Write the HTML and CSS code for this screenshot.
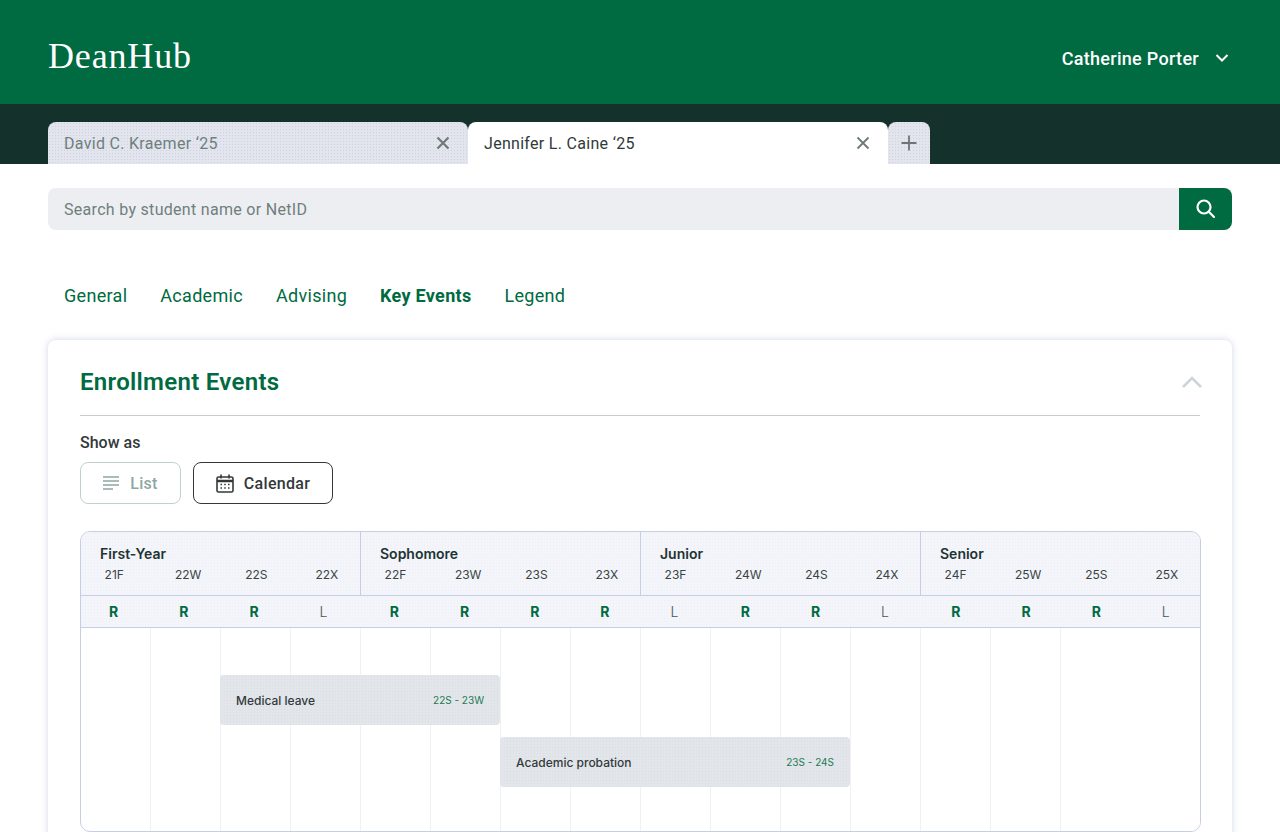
FILE: index.html
```html
<!DOCTYPE html>
<html lang="en">

<head>
  <meta charset="UTF-8">
  <title>DeanHub</title>
  <meta name="viewport" content="width=device-width, initial-scale=1">
  <link rel="stylesheet" href="styles.css">
</head>

<body>
  <header class="topbar">
    <div class="logo">DeanHub</div>
    <div class="user">
      <span>Catherine Porter</span>
      <svg width="14" height="14" viewBox="0 0 14 14" fill="none" stroke="#fff" stroke-width="2">
        <path d="M1.5 4l5.5 5.5L12.500 4" />
      </svg>
    </div>
  </header>

  <div class="tabbar">
    <div class="tab tab-off">
      <span>David C. Kraemer ‘25</span>
      <svg class="tab-x" width="14" height="14" viewBox="0 0 14 14" fill="none" stroke="#6d7a78" stroke-width="2.2">
        <path d="M1.500 1.500l11 11M12.500 1.500l-11 11" />
      </svg>
    </div>
    <div class="tab tab-on">
      <span>Jennifer L. Caine ‘25</span>
      <svg class="tab-x" width="14" height="14" viewBox="0 0 14 14" fill="none" stroke="#6d7a78" stroke-width="1.800">
        <path d="M1.500 1.500l11 11M12.500 1.500l-11 11" />
      </svg>
    </div>
    <div class="tab-add">
      <svg width="16" height="16" viewBox="0 0 16 16" fill="none" stroke="#6e7675" stroke-width="1.800">
        <path d="M8 .5v15M.5 8h15" />
      </svg>
    </div>
  </div>

  <main class="page">
    <form class="search">
      <input type="text" placeholder="Search by student name or NetID">
      <button type="button" aria-label="Search">
        <svg width="20" height="20" viewBox="0 0 20 20" fill="none" stroke="#fff" stroke-width="2.200">
          <circle cx="8" cy="8" r="6.500" />
          <path d="M12.800 12.800l5.200 5.200" stroke-linecap="round" />
        </svg>
      </button>
    </form>

    <nav class="subnav">
      <a>General</a>
      <a>Academic</a>
      <a>Advising</a>
      <a class="current">Key Events</a>
      <a>Legend</a>
    </nav>

    <section class="card">
      <div class="card-head">
        <h2>Enrollment Events</h2>
        <svg width="20" height="12" viewBox="0 0 20 12" fill="none" stroke="#ccd5d5" stroke-width="2.600">
          <path d="M1 11l9-9 9 9" />
        </svg>
      </div>

      <div class="show-label">Show as</div>
      <div class="show-btns">
        <button class="view-btn view-list">
          <svg width="16" height="14" viewBox="0 0 16 14" fill="none" stroke="#8fa6a3" stroke-width="1.500">
            <path d="M0 1h16M0 5h16M0 9h16M0 13h10" />
          </svg>
          List
        </button>
        <button class="view-btn view-cal">
          <svg width="18" height="19" viewBox="0 0 18 19" fill="none" stroke="#33393a" stroke-width="1.600">
            <rect x="1" y="3" width="16" height="15" rx="1.500" />
            <path d="M1 7h16" stroke-width="2.500" />
            <path d="M5 .5v4M13 .5v4" />
            <path d="M4.500 10.500h1.500M8.250 10.500h1.500M12 10.500h1.500M4.500 14h1.500M8.250 14h1.500M12 14h1.500" stroke-width="1.300" />
          </svg>
          Calendar
        </button>
      </div>

      <div class="cal">
        <div class="cal-years">
          <div class="year">
            <h3>First-Year</h3>
            <div class="terms"><span>21F</span><span>22W</span><span>22S</span><span>22X</span></div>
          </div>
          <div class="year">
            <h3>Sophomore</h3>
            <div class="terms"><span>22F</span><span>23W</span><span>23S</span><span>23X</span></div>
          </div>
          <div class="year">
            <h3>Junior</h3>
            <div class="terms"><span>23F</span><span>24W</span><span>24S</span><span>24X</span></div>
          </div>
          <div class="year">
            <h3>Senior</h3>
            <div class="terms"><span>24F</span><span>25W</span><span>25S</span><span>25X</span></div>
          </div>
        </div>
        <div class="cal-status">
          <span class="reg">R</span><span class="reg">R</span><span class="reg">R</span><span>L</span>
          <span class="reg">R</span><span class="reg">R</span><span class="reg">R</span><span class="reg">R</span>
          <span>L</span><span class="reg">R</span><span class="reg">R</span><span>L</span>
          <span class="reg">R</span><span class="reg">R</span><span class="reg">R</span><span>L</span>
        </div>
        <div class="cal-body">
          <div class="event event-leave">
            <span class="event-name">Medical leave</span>
            <span class="event-range">22S - 23W</span>
          </div>
          <div class="event event-probation">
            <span class="event-name">Academic probation</span>
            <span class="event-range">23S - 24S</span>
          </div>
        </div>
      </div>
    </section>
  </main>
</body>

</html>
```

FILE: styles.css
```css
html,
body {
  height: 832px;
  overflow: hidden;
}

body {
  margin: 0;
  background: #fff;
  font-family: Roboto, Arial, sans-serif;
  color: #2f3a3a;
}

.topbar {
  height: 104px;
  background: #006a41;
  color: #fff;
  display: flex;
  align-items: center;
  justify-content: space-between;
  padding: 0 51px 0 48px;
}

.logo {
  font-family: "Liberation Serif", serif;
  font-size: 36px;
  letter-spacing: 0.85px;
  padding-top: 7px;
}

.user {
  display: flex;
  align-items: center;
  gap: 16px;
  font-size: 18px;
  font-weight: 500;
  padding-top: 12px;
  letter-spacing: 0.3px;
}

.tabbar {
  height: 42px;
  padding: 18px 48px 0;
  background: #14312c;
  display: flex;
  align-items: stretch;
}

.tab {
  width: 420px;
  box-sizing: border-box;
  padding: 0 18px 0 16px;
  border-radius: 8px 8px 0 0;
  display: flex;
  align-items: center;
  justify-content: space-between;
  font-size: 16px;
  letter-spacing: 0.3px;
}

.tab-off,
.tab-add {
  background-color: #e2e5ed;
  background-image: radial-gradient(#cfd3e0 0.6px, transparent 0.7px);
  background-size: 3px 3px;
}

.tab-off {
  color: #6f7f7d;
}

.tab-on {
  background: #fff;
  color: #2f3a3a;
}

.tab-add {
  width: 42px;
  border-radius: 8px 8px 0 0;
  display: flex;
  align-items: center;
  justify-content: center;
}

.page {
  padding: 24px 48px 0;
}

.search {
  display: flex;
  height: 42px;
}

.search input {
  flex: 1;
  border: none;
  outline: none;
  padding: 0 16px;
  background: #edeef2;
  border-radius: 8px 0 0 8px;
  font-family: inherit;
  font-size: 16px;
  letter-spacing: 0.3px;
}

.search input::placeholder {
  color: #6f7f7d;
  opacity: 1;
}

.search button {
  width: 53px;
  border: none;
  padding: 0;
  background: #006a41;
  border-radius: 0 8px 8px 0;
  display: flex;
  align-items: center;
  justify-content: center;
}

.subnav {
  display: flex;
  gap: 33px;
  padding: 55px 16px 0;
  height: 55px;
  font-size: 18px;
  letter-spacing: 0.3px;
  color: #006a41;
}

.subnav .current {
  font-weight: 700;
}

.card {
  padding: 0 32px 32px;
  border-radius: 8px;
  box-shadow: 0 0 6px 1px rgba(190, 196, 222, 0.55);
}

.card-head {
  height: 76px;
  box-sizing: border-box;
  padding-top: 9px;
  border-bottom: 1px solid #c6cccc;
  display: flex;
  align-items: center;
  justify-content: space-between;
}

.card-head h2 {
  margin: 0;
  font-size: 24px;
  font-weight: 600;
  letter-spacing: 0.3px;
  color: #006a41;
}

.card-head svg {
  margin-right: -2px;
}

.show-label {
  margin-top: 17px;
  font-size: 16px;
  font-weight: 500;
  line-height: 20px;
  color: #33393a;
}

.show-btns {
  display: flex;
  gap: 12px;
  margin-top: 9px;
}

.view-btn {
  height: 42px;
  box-sizing: border-box;
  background: #fff;
  border-radius: 8px;
  display: flex;
  align-items: center;
  justify-content: center;
  font-family: inherit;
  font-size: 16px;
  font-weight: 500;
  letter-spacing: 0.3px;
}

.view-list {
  width: 101px;
  gap: 11px;
  border: 1px solid #c3d0d0;
  color: #8fa6a3;
}

.view-cal {
  width: 140px;
  gap: 10px;
  border: 1px solid #33393a;
  color: #33393a;
}

.cal {
  margin-top: 27px;
  box-sizing: border-box;
  width: 1121px;
  height: 301px;
  border: 1px solid #c5cee4;
  border-radius: 10px;
  font-family: Inter, Arial, sans-serif;
  overflow: hidden;
}

.cal-years,
.cal-status {
  background-color: #f3f5fa;
  background-image: radial-gradient(#ebeef5 0.6px, transparent 0.7px);
  background-size: 3px 3px;
  border-bottom: 1px solid #c5cee4;
}

.cal-years {
  display: grid;
  grid-template-columns: repeat(4, 280px);
  height: 63px;
}

.year {
  border-left: 1px solid #c5cee4;
  margin-left: -1px;
  padding-top: 13px;
}

.year h3 {
  margin: 0 0 0 19px;
  font-size: 14px;
  line-height: 18px;
  font-weight: 600;
  color: #223331;
}

.terms {
  display: grid;
  grid-template-columns: repeat(4, 70.3px);
  margin-top: 4px;
  font-size: 12px;
  line-height: 16px;
  color: #3a4443;
}

.terms span {
  padding-left: 23.6px;
}

.cal-status {
  display: grid;
  grid-template-columns: repeat(16, 70.2px);
  height: 31px;
  font-size: 14px;
  font-weight: 300;
  line-height: 31px;
  color: #4a5453;
}

.cal-status span {
  padding-left: 28px;
}

.cal-status .reg {
  font-weight: 700;
  color: #006a41;
}

.cal-body {
  display: grid;
  grid-template-columns: repeat(16, 70px);
  grid-auto-rows: 50px;
  row-gap: 12px;
  margin-left: -1px;
  padding-top: 47px;
  height: 205px;
  box-sizing: border-box;
  background:
    linear-gradient(#fff, #fff) right / 139px 100% no-repeat,
    linear-gradient(to right, #f0f1f5 1px, transparent 1px) 0 0 / 70px 100%;
}

.event {
  background-color: #e2e6eb;
  background-image: radial-gradient(#d8dde3 0.6px, transparent 0.7px);
  background-size: 3px 3px;
  border-radius: 4px;
  display: flex;
  align-items: center;
  justify-content: space-between;
  padding: 0 16px;
}

.event-leave {
  grid-row: 1;
  grid-column: 3 / 7;
}

.event-probation {
  grid-row: 2;
  grid-column: 7 / 12;
}

.event-name {
  font-size: 12px;
  font-weight: 500;
  color: #33393a;
}

.event-range {
  font-size: 10px;
  color: #1f7a55;
}
```
